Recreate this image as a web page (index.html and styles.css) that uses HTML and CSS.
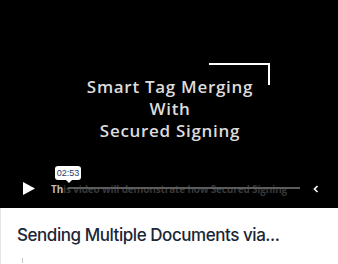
FILE: index.html
```html
<!DOCTYPE html>
<html>
<head>
<meta charset="utf-8">
<link rel="stylesheet" href="styles.css">
</head>
<body>
<div class="card">
  <div class="video">
    <div class="corner"></div>
    <div class="headline">
      <div>Smart Tag Merging</div>
      <div>With</div>
      <div>Secured Signing</div>
    </div>
    <div class="controls">
      <svg class="play" width="12" height="13" viewBox="0 0 12 13"><path d="M0 0 L12 6.5 L0 13 Z" fill="#fff"/></svg>
      <div class="track">
        <span class="caption"><span class="lit">Th</span>is video will demonstrate how Secured Signing</span>
        <div class="bar"></div>
        <div class="tip">02:53</div>
      </div>
      <svg class="chev" width="6" height="8" viewBox="0 0 6 8"><path d="M4.5 1 L1.5 4 L4.5 7" fill="none" stroke="#fff" stroke-width="1.6"/></svg>
    </div>
  </div>
  <div class="info">
    <h2 class="title">Sending Multiple Documents via...</h2>
    <div class="mark"></div>
  </div>
</div>
</body>
</html>
```
FILE: styles.css
```css
* { box-sizing: border-box; }
html, body { margin: 0; padding: 0; background: #fff; }
body { width: 338px; height: 264px; overflow: hidden; }
.card { width: 338px; }
.video {
  position: relative;
  height: 208px;
  background: #000;
  display: flex;
  align-items: center;
  justify-content: center;
}
.headline {
  font-family: "Open Sans", sans-serif;
  font-weight: 600;
  font-size: 17px;
  letter-spacing: 0.7px;
  line-height: 22px;
  color: #dcdcdc;
  text-align: center;
  margin-top: 10px;
  margin-left: 2px;
}
.corner {
  position: absolute;
  left: 209px;
  top: 63px;
  width: 61px;
  height: 22px;
  border-top: 2px solid #fff;
  border-right: 2px solid #fff;
}
.controls {
  position: absolute;
  left: 23px;
  right: 0;
  top: 182px;
  height: 13px;
  display: flex;
  align-items: center;
}
.play { flex: none; }
.track {
  position: relative;
  flex: none;
  width: 249px;
  margin-left: 16px;
  height: 13px;
}
.caption {
  position: absolute;
  left: 0;
  top: 1px;
  white-space: nowrap;
  font-family: "Open Sans", sans-serif;
  font-weight: 700;
  font-size: 10px;
  letter-spacing: -0.15px;
  line-height: 13px;
  color: #383838;
}
.lit { color: #bdbdbd; }
.bar {
  position: absolute;
  left: 17px;
  right: 0;
  top: 5px;
  height: 2px;
  background: #5c5c5c;
}
.tip {
  position: absolute;
  left: 4px;
  top: -16px;
  width: 26px;
  height: 14px;
  background: #fff;
  border-radius: 3px;
  font-family: "Liberation Sans", sans-serif;
  font-size: 9px;
  line-height: 14px;
  text-align: center;
  color: #1d3a6e;
}
.tip::after {
  content: "";
  position: absolute;
  left: 11px;
  bottom: -3px;
  border-left: 3px solid transparent;
  border-right: 3px solid transparent;
  border-top: 3px solid #fff;
}
.chev { flex: none; margin-left: 13px; }
.info {
  border-left: 1px solid #e6e6e6;
  height: 56px;
  padding: 17px 0 0 16px;
}
.title {
  margin: 0;
  font-family: "Inter", sans-serif;
  font-weight: 500;
  font-size: 17px;
  line-height: 20px;
  letter-spacing: -0.45px;
  color: #1b2636;
}
.mark {
  margin: 13px 0 0 5px;
  width: 1px;
  height: 5px;
  background: #c8c8c8;
}
```
